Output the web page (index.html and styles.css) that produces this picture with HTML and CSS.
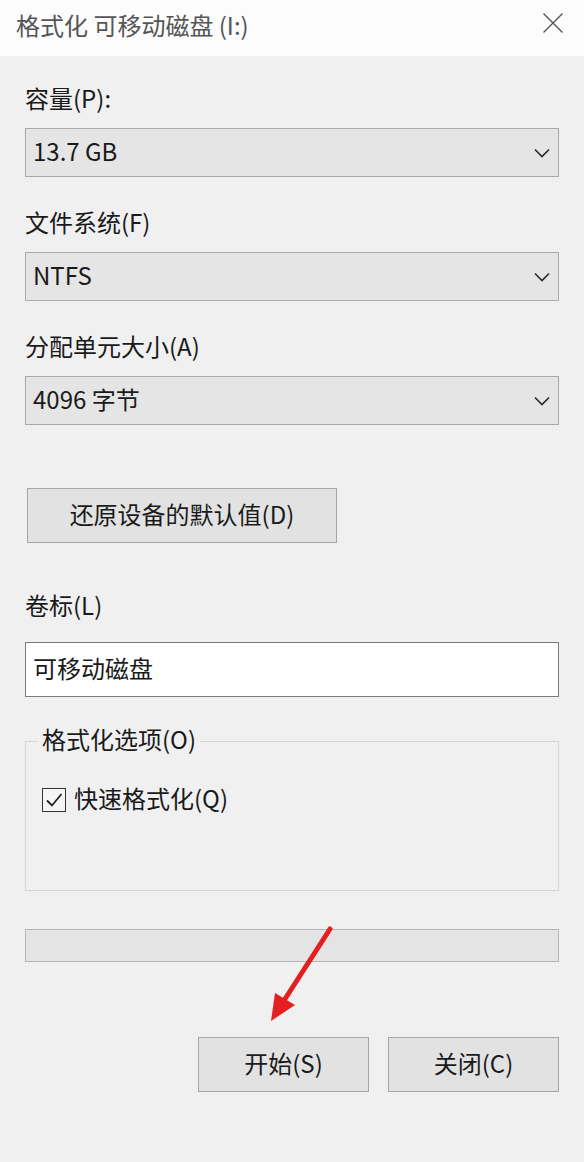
FILE: index.html
```html
<!DOCTYPE html>
<html lang="zh-CN">
<head>
<meta charset="utf-8">
<title>格式化 可移动磁盘 (I:)</title>
<link rel="stylesheet" href="styles.css">
</head>
<body>
<div class="window">
  <header class="titlebar">
    <span class="title">格式化 可移动磁盘 (I:)</span>
    <svg class="close" width="20" height="20" viewBox="0 0 20 20"><path d="M0.5 0.5 L19.5 19.5 M19.5 0.5 L0.5 19.5" stroke="#555" stroke-width="1.4" fill="none"/></svg>
  </header>
  <main class="content">
    <div class="field">
      <div class="label">容量(P):</div>
      <div class="combo"><span>13.7 GB</span><svg class="chev" width="16" height="10" viewBox="0 0 16 10"><path d="M1 1.5 L8 8.5 L15 1.5" stroke="#2a2a2a" stroke-width="1.6" fill="none"/></svg></div>
    </div>
    <div class="field">
      <div class="label">文件系统(F)</div>
      <div class="combo"><span>NTFS</span><svg class="chev" width="16" height="10" viewBox="0 0 16 10"><path d="M1 1.5 L8 8.5 L15 1.5" stroke="#2a2a2a" stroke-width="1.6" fill="none"/></svg></div>
    </div>
    <div class="field">
      <div class="label">分配单元大小(A)</div>
      <div class="combo"><span>4096 字节</span><svg class="chev" width="16" height="10" viewBox="0 0 16 10"><path d="M1 1.5 L8 8.5 L15 1.5" stroke="#2a2a2a" stroke-width="1.6" fill="none"/></svg></div>
    </div>
    <button class="btn reset">还原设备的默认值(D)</button>
    <div class="field volume">
      <div class="label">卷标(L)</div>
      <div class="textbox">可移动磁盘</div>
    </div>
    <fieldset class="group">
      <legend>格式化选项(O)</legend>
      <div class="check">
        <span class="box"><svg width="22" height="22" viewBox="0 0 22 22"><path d="M4 11.5 L9 16.5 L18.5 5" stroke="#222" stroke-width="1.8" fill="none"/></svg></span>
        <span>快速格式化(Q)</span>
      </div>
    </fieldset>
    <div class="progress"></div>
    <div class="actions">
      <button class="btn action">开始(S)</button>
      <button class="btn action">关闭(C)</button>
    </div>
  </main>
  <svg class="arrow" width="584" height="1162" viewBox="0 0 584 1162">
    <line x1="330" y1="929" x2="285" y2="999" stroke="#e3201f" stroke-width="5" stroke-linecap="round"/>
    <polygon points="271,1021 275,993 295,1005" fill="#e3201f"/>
  </svg>
</div>
</body>
</html>
```
FILE: styles.css
```css
html, body {
  margin: 0;
  padding: 0;
}
body {
  background: #f0f0f1;
  font-family: "Noto Sans CJK SC", "Noto Sans", sans-serif;
  font-size: 24px;
  color: #1a1a1a;
}
.window {
  position: relative;
  width: 584px;
  height: 1162px;
  overflow: hidden;
}
.titlebar {
  height: 56px;
  background: #fcfcfd;
  display: flex;
  align-items: center;
  justify-content: space-between;
  padding: 0 21px 0 16px;
  box-sizing: border-box;
}
.title {
  color: #555;
  line-height: 30px;
  margin-top: -6px;
}
.close {
  display: block;
  margin-top: -10px;
}
.content {
  padding: 0 25px;
  display: flex;
  flex-direction: column;
}
.field {
  display: flex;
  flex-direction: column;
  margin-top: 30px;
}
.field:first-child {
  margin-top: 27px;
}
.label {
  line-height: 30px;
  height: 30px;
  margin-bottom: 15px;
}
.combo {
  height: 49px;
  box-sizing: border-box;
  border: 1px solid #a9a9a9;
  background: #e5e5e5;
  display: flex;
  align-items: center;
  justify-content: space-between;
  padding: 0 8px 0 7px;
}
.combo span {
  line-height: 30px;
  margin-top: -4px;
}
.chev {
  display: block;
}
.btn {
  font: inherit;
  color: #1a1a1a;
  background: #e2e2e2;
  border: 1px solid #a6a6a6;
  height: 55px;
  box-sizing: border-box;
  padding: 0 0 4px 0;
  line-height: 30px;
}
.reset {
  align-self: flex-start;
  margin: 63px 0 0 2px;
  width: 310px;
}
.field.volume {
  margin-top: 47px;
}
.volume .label {
  margin-bottom: 22px;
}
.textbox {
  height: 55px;
  box-sizing: border-box;
  border: 1px solid #7a7a7a;
  background: #ffffff;
  display: flex;
  align-items: center;
  padding: 0 7px 4px 7px;
  line-height: 30px;
}
.group {
  margin: 29px 0 0 0;
  padding: 0 12px 75px 12px;
  border: 1px solid #d6d6d6;
  min-width: 0;
}
.group legend {
  padding: 0 4px;
  line-height: 30px;
  position: relative;
  top: -2px;
}
.check {
  display: flex;
  align-items: center;
  margin: 29px 0 0 4px;
  line-height: 30px;
  height: 30px;
}
.check span:last-child {
  position: relative;
  top: -2px;
}
.box {
  width: 24px;
  height: 24px;
  box-sizing: border-box;
  border: 1.5px solid #333;
  background: #f6f6f6;
  display: flex;
  align-items: center;
  justify-content: center;
  margin-right: 8px;
}
.box svg {
  display: block;
}
.progress {
  margin-top: 38px;
  height: 33px;
  box-sizing: border-box;
  border: 1px solid #b4b4b4;
  background: #e4e4e5;
}
.actions {
  display: flex;
  justify-content: flex-end;
  gap: 19px;
  margin-top: 75px;
}
.action {
  width: 171px;
}
.arrow {
  position: absolute;
  left: 0;
  top: 0;
  pointer-events: none;
}
```
